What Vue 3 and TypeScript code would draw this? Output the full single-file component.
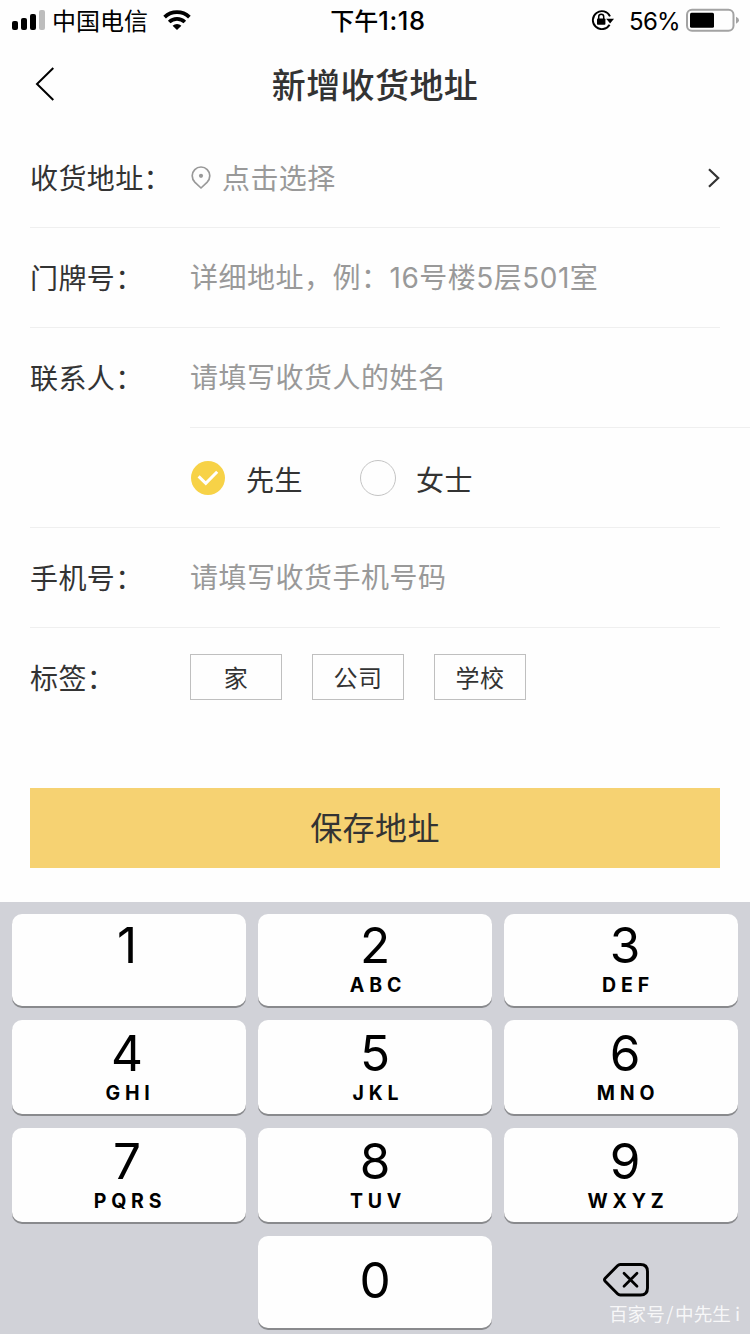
<script setup lang="ts">
import { ref } from 'vue'

interface Key {
  digit: string
  letters: string
}

const gender = ref<'male' | 'female'>('male')
const tags: string[] = ['家', '公司', '学校']

const keys: Key[] = [
  { digit: '1', letters: '' },
  { digit: '2', letters: 'ABC' },
  { digit: '3', letters: 'DEF' },
  { digit: '4', letters: 'GHI' },
  { digit: '5', letters: 'JKL' },
  { digit: '6', letters: 'MNO' },
  { digit: '7', letters: 'PQRS' },
  { digit: '8', letters: 'TUV' },
  { digit: '9', letters: 'WXYZ' },
]
</script>

<template>
  <div class="screen">
    <header class="status">
      <div class="status-left">
        <svg class="signal" width="34" height="20" viewBox="0 0 34 20">
          <rect x="0" y="11" width="6" height="9" rx="2" />
          <rect x="9" y="8" width="6" height="12" rx="2" />
          <rect x="18" y="4" width="6" height="16" rx="2" />
          <rect x="27" y="0" width="6" height="20" rx="2" fill="#bdbdbd" />
        </svg>
        <span class="carrier">中国电信</span>
        <svg class="wifi" width="28" height="20" viewBox="0 0 28 20">
          <path d="M1.6 7.1A18 18 0 0 1 26.4 7.1" fill="none" stroke="#000" stroke-width="3.8" />
          <path d="M6.2 12A11.2 11.2 0 0 1 21.8 12" fill="none" stroke="#000" stroke-width="3.7" />
          <path d="M14 20L9.6 15.7A6.3 6.3 0 0 1 18.4 15.7Z" />
        </svg>
      </div>
      <div class="time">下午<span class="clock">1:18</span></div>
      <div class="status-right">
        <svg class="lock" width="24" height="20" viewBox="0 0 24 20">
          <path d="M18.6 14.7A9 9 0 1 1 19 6.3" fill="none" stroke="#000" stroke-width="1.9" />
          <path d="M15.2 8.8H23L19.1 13.6Z" />
          <rect x="6" y="8.4" width="8.4" height="6.3" rx="0.8" />
          <path d="M7.7 9V6.8a2.5 2.5 0 0 1 5 0V9" fill="none" stroke="#000" stroke-width="1.5" />
        </svg>
        <span class="percent">56%</span>
        <svg class="battery" width="54" height="24" viewBox="0 0 54 24">
          <rect x="1" y="1.7" width="46.5" height="21" rx="5" fill="none" stroke="#a3a3a3" stroke-width="2" />
          <rect x="4" y="4.7" width="24" height="15" rx="1.5" />
          <path d="M50 8.7Q53 9.8 53 12.2T50 15.7Z" fill="#a3a3a3" />
        </svg>
      </div>
    </header>

    <nav class="nav">
      <svg class="back" width="20" height="36" viewBox="0 0 20 36">
        <path d="M18.3 2L2 18L18.3 34" fill="none" stroke="#000" stroke-width="2" />
      </svg>
      <h1 class="title">新增收货地址</h1>
    </nav>

    <main class="form">
      <div class="row">
        <span class="label">收货地址：</span>
        <svg class="pin" width="20" height="24" viewBox="0 0 20 24">
          <path d="M10 22L4 16.3C2.2 14.5 1.2 12.5 1.2 9.8A8.8 8.8 0 0 1 18.8 9.8C18.8 12.5 17.8 14.5 16 16.3Z" fill="none" stroke="#999" stroke-width="1.7" stroke-linejoin="round" />
          <circle cx="10" cy="9.8" r="2.1" fill="#999" />
        </svg>
        <span class="hint pick">点击选择</span>
        <svg class="chevron" width="14" height="22" viewBox="0 0 14 22">
          <path d="M3 2.2L12.2 11L3 19.8" fill="none" stroke="#333" stroke-width="2.2" />
        </svg>
      </div>
      <div class="row">
        <span class="label">门牌号：</span>
        <span class="hint raised">详细地址，例：16号楼5层501室</span>
      </div>
      <div class="row open">
        <span class="label">联系人：</span>
        <span class="hint raised">请填写收货人的姓名</span>
      </div>
      <div class="inset-line"></div>
      <div class="row genders">
        <div class="radio" @click="gender = 'male'">
          <span class="dot" :class="{ on: gender === 'male' }">
            <svg v-if="gender === 'male'" width="34" height="34" viewBox="0 0 34 34">
              <path d="M7.6 15.3L14.8 22.3L26.2 10.8" fill="none" stroke="#fff" stroke-width="3" />
            </svg>
          </span>
          <span class="name">先生</span>
        </div>
        <div class="radio" @click="gender = 'female'">
          <span class="dot" :class="{ on: gender === 'female' }">
            <svg v-if="gender === 'female'" width="34" height="34" viewBox="0 0 34 34">
              <path d="M7.6 15.3L14.8 22.3L26.2 10.8" fill="none" stroke="#fff" stroke-width="3" />
            </svg>
          </span>
          <span class="name">女士</span>
        </div>
      </div>
      <div class="row">
        <span class="label">手机号：</span>
        <span class="hint raised">请填写收货手机号码</span>
      </div>
      <div class="row open">
        <span class="label">标签：</span>
        <div class="tags">
          <span v-for="tag in tags" :key="tag" class="tag">{{ tag }}</span>
        </div>
      </div>
      <button class="save">保存地址</button>
    </main>

    <section class="keypad">
      <div v-for="key in keys" :key="key.digit" class="key">
        <span class="digit">{{ key.digit }}</span>
        <span class="letters">{{ key.letters }}</span>
      </div>
      <div class="blank"></div>
      <div class="key zero"><span class="digit">0</span></div>
      <div class="erase">
        <svg width="48" height="36" viewBox="0 0 48 36">
          <path d="M18.3 2.5H38.5Q45.5 2.5 45.5 9.5V26Q45.5 33 38.5 33H18.3Q16.7 33 15.5 31.8L3.2 19.3Q1.8 17.8 3.2 16.3L15.5 3.7Q16.7 2.5 18.3 2.5Z" fill="none" stroke="#000" stroke-width="2.9" />
          <path d="M22 11.3L35 24.3M35 11.3L22 24.3" stroke="#000" stroke-width="2.7" stroke-linecap="round" />
        </svg>
      </div>
    </section>
    <div class="credit">百家号<span class="slash">/</span>中先生<span class="thin-i">i</span></div>
  </div>
</template>

<style>
body {
  background: #fefefe;
}
</style>

<style scoped>
.screen {
  position: relative;
  box-sizing: border-box;
  width: 750px;
  height: 1334px;
  overflow: hidden;
  background: #fefefe;
  color: #333;
  font-family: Inter, "Noto Sans CJK SC", sans-serif;
  display: flex;
  flex-direction: column;
}
.status {
  height: 40px;
  display: grid;
  grid-template-columns: 1fr auto 1fr;
  grid-template-rows: 40px;
  align-items: center;
  color: #000;
  font-size: 24px;
  line-height: 37px;
}
.status-left,
.status-right {
  display: flex;
  align-items: center;
}
.status-left {
  padding-left: 12px;
}
.carrier {
  margin-left: 6px;
  padding-top: 3px;
}
.wifi {
  margin-left: 15px;
}
.time {
  font-weight: 500;
  padding: 3px 0 0 6px;
}
.clock {
  font-size: 25.5px;
  line-height: 30px;
  letter-spacing: 0.6px;
}
.status-right {
  justify-content: flex-end;
  padding-right: 10px;
}
.percent {
  margin: 0 6px 0 14px;
  padding-top: 3px;
  letter-spacing: -0.7px;
}
.nav {
  height: 88px;
  display: flex;
  align-items: center;
}
.back {
  margin-left: 35px;
}
.title {
  flex: 1;
  margin: 3px 55px 0 0;
  text-align: center;
  font-size: 34px;
  font-weight: 500;
  letter-spacing: 0.4px;
  line-height: 85px;
}
.form {
  height: 774px;
}
.row {
  box-sizing: border-box;
  height: 100px;
  margin: 0 30px;
  border-bottom: 1px solid #efefef;
  display: flex;
  align-items: center;
  font-size: 28px;
  line-height: 40px;
  letter-spacing: 0.4px;
}
.row.open {
  border-bottom-color: transparent;
}
.inset-line {
  height: 1px;
  margin: -1px 0 0 190px;
  background: #efefef;
}
.label {
  width: 160px;
  flex: none;
  padding-top: 3px;
}
.hint {
  color: #999;
  letter-spacing: 0.5px;
}
.raised {
  padding-top: 1px;
}
.pick {
  margin-left: 11px;
  padding-top: 3px;
  letter-spacing: 0.4px;
}
.pin {
  margin-left: 1px;
}
.chevron {
  margin-left: auto;
}
.genders {
  padding-left: 160px;
}
.radio {
  width: 170px;
  display: flex;
  align-items: center;
}
.dot {
  box-sizing: border-box;
  width: 36px;
  height: 36px;
  border: 1px solid #c4c4c4;
  border-radius: 50%;
  display: flex;
}
.dot.on {
  border-color: transparent;
  background: #f7d247;
  background-clip: padding-box;
}
.name {
  margin: 6px 0 0 20px;
}
.tags {
  display: flex;
  gap: 30px;
  margin-top: -2px;
}
.tag {
  box-sizing: border-box;
  width: 92px;
  height: 46px;
  border: 1px solid #bfbfbf;
  font-size: 24px;
  line-height: 47px;
  text-align: center;
}
.save {
  display: block;
  width: 690px;
  height: 80px;
  margin: 60px 30px 0;
  padding: 2px 0 0;
  border: 0;
  background: #f6d272;
  color: #333;
  font: 32px/78px Inter, "Noto Sans CJK SC", sans-serif;
  letter-spacing: 0.4px;
}
.keypad {
  box-sizing: border-box;
  height: 432px;
  padding: 12px 12px 0;
  background: #d1d2d8;
  display: grid;
  grid-template-columns: repeat(3, 234px);
  grid-template-rows: 92px 94px 94px 92px;
  gap: 14px 12px;
  color: #000;
}
.key {
  box-sizing: border-box;
  border-radius: 10px;
  background: #fefefe;
  box-shadow: 0 2px 0 #898a8d;
  display: flex;
  flex-direction: column;
  align-items: center;
  justify-content: flex-end;
}
.key:nth-child(3n + 1) {
  padding-right: 4px;
}
.key:nth-child(3n) {
  padding-left: 8px;
}
.digit {
  font-size: 49.5px;
  line-height: 50px;
  margin-bottom: 1px;
}
.letters {
  height: 28px;
  margin-bottom: 7px;
  font-size: 19.5px;
  font-weight: 700;
  line-height: 28px;
  letter-spacing: 4.8px;
  text-indent: 6px;
}
.zero {
  justify-content: center;
  padding-bottom: 3px;
}
.erase {
  display: flex;
  align-items: center;
  justify-content: center;
  padding: 0 0 4px 10px;
}
.credit {
  position: absolute;
  right: 10px;
  bottom: 7px;
  color: rgba(255, 255, 255, 0.85);
  font-family: "Noto Sans CJK SC", sans-serif;
  font-size: 18.6px;
  line-height: 28px;
}
.slash {
  margin: 0 1.5px;
}
.thin-i {
  margin-left: 4px;
}
</style>
